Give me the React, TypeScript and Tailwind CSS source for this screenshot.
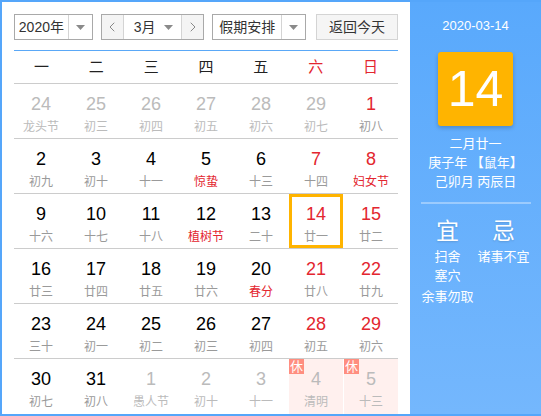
import { ChevronLeft, ChevronRight } from 'lucide-react'

type Day = {
  d: number
  lunar: string
  other?: boolean
  red?: boolean
  fest?: boolean
  today?: boolean
  rest?: boolean
}

const weekdays = ['一', '二', '三', '四', '五', '六', '日']

const rows: Day[][] = [
  [
    { d: 24, lunar: '龙头节', other: true },
    { d: 25, lunar: '初三', other: true },
    { d: 26, lunar: '初四', other: true },
    { d: 27, lunar: '初五', other: true },
    { d: 28, lunar: '初六', other: true },
    { d: 29, lunar: '初七', other: true },
    { d: 1, lunar: '初八', red: true },
  ],
  [
    { d: 2, lunar: '初九' },
    { d: 3, lunar: '初十' },
    { d: 4, lunar: '十一' },
    { d: 5, lunar: '惊蛰', fest: true },
    { d: 6, lunar: '十三' },
    { d: 7, lunar: '十四', red: true },
    { d: 8, lunar: '妇女节', red: true, fest: true },
  ],
  [
    { d: 9, lunar: '十六' },
    { d: 10, lunar: '十七' },
    { d: 11, lunar: '十八' },
    { d: 12, lunar: '植树节', fest: true },
    { d: 13, lunar: '二十' },
    { d: 14, lunar: '廿一', red: true, today: true },
    { d: 15, lunar: '廿二', red: true },
  ],
  [
    { d: 16, lunar: '廿三' },
    { d: 17, lunar: '廿四' },
    { d: 18, lunar: '廿五' },
    { d: 19, lunar: '廿六' },
    { d: 20, lunar: '春分', fest: true },
    { d: 21, lunar: '廿八', red: true },
    { d: 22, lunar: '廿九', red: true },
  ],
  [
    { d: 23, lunar: '三十' },
    { d: 24, lunar: '初一' },
    { d: 25, lunar: '初二' },
    { d: 26, lunar: '初三' },
    { d: 27, lunar: '初四' },
    { d: 28, lunar: '初五', red: true },
    { d: 29, lunar: '初六', red: true },
  ],
  [
    { d: 30, lunar: '初七' },
    { d: 31, lunar: '初八' },
    { d: 1, lunar: '愚人节', other: true },
    { d: 2, lunar: '初十', other: true },
    { d: 3, lunar: '十一', other: true },
    { d: 4, lunar: '清明', other: true, rest: true },
    { d: 5, lunar: '十三', other: true, rest: true },
  ],
]

function Caret() {
  return (
    <svg width="9" height="5" viewBox="0 0 9 5">
      <path d="M0 0h9L4.5 5z" fill="#8a8a8a" />
    </svg>
  )
}

function Cell({ day }: { day: Day }) {
  const numColor = day.other ? 'text-[#bbbbbb]' : day.red ? 'text-[#e3262f]' : 'text-black'
  const lunarColor = day.other ? 'text-[#bbbbbb]' : day.fest ? 'text-[#e3262f]' : 'text-[#9a9a9a]'
  return (
    <div
      className={`relative flex flex-col items-center pt-[9px] ${day.rest ? 'bg-[#fff0ee]' : ''} ${
        day.today ? 'outline-3 -outline-offset-3 outline-[#ffb400]' : ''
      }`}
    >
      {day.rest && (
        <span className="absolute left-0 top-0 w-[15px] h-[15px] bg-[#ff8e80] text-white text-[13px] leading-[15px] text-center">
          休
        </span>
      )}
      <span className={`text-[18px] leading-[22px] ${numColor}`}>{day.d}</span>
      <span className={`text-[12px] leading-[16px] mt-[4px] ${lunarColor}`}>{day.lunar}</span>
    </div>
  )
}

export default function App() {
  return (
    <div
      className="w-[541px] h-[416px] flex border-l-2 border-t-2 border-b-2 border-[#55a6fa] bg-white"
      style={{ fontFamily: '"Liberation Sans", "Noto Sans CJK SC", sans-serif' }}
    >
      <div className="w-[408px] pl-[12px] pr-[12px] pt-[12px] flex flex-col">
        <div className="flex items-center h-[26px] text-[14px] text-[#333]">
          <div className="flex h-[26px] w-[79px] border border-[#a9a9a9]">
            <div className="flex-1 flex items-center justify-center">2020年</div>
            <div className="w-[24px] border-l border-[#d4d4d4] flex items-center justify-center">
              <Caret />
            </div>
          </div>
          <div className="flex h-[26px] w-[104px] ml-[8px] border border-[#a9a9a9]">
            <div className="w-[21px] bg-[#f4f4f4] flex items-center justify-center text-[#777]">
              <ChevronLeft size={16} strokeWidth={1.3} />
            </div>
            <div className="flex-1 flex items-center border-l border-r border-[#d4d4d4] pl-[10px] pr-[8px] justify-between">
              <span>3月</span>
              <Caret />
            </div>
            <div className="w-[21px] bg-[#f4f4f4] flex items-center justify-center text-[#777]">
              <ChevronRight size={16} strokeWidth={1.3} />
            </div>
          </div>
          <div className="flex h-[26px] w-[94px] ml-[8px] border border-[#a9a9a9]">
            <div className="flex-1 flex items-center justify-center">假期安排</div>
            <div className="w-[24px] border-l border-[#d4d4d4] flex items-center justify-center">
              <Caret />
            </div>
          </div>
          <div className="h-[26px] w-[82px] ml-[10px] border border-[#d4d4d4] bg-[#f5f5f5] flex items-center justify-center">
            返回今天
          </div>
        </div>

        <div className="mt-[10px] border-t border-[#5aa8f7] grid grid-cols-7 h-[34px] border-b border-b-[#cccccc] items-center text-[15px]">
          {weekdays.map((w, i) => (
            <div key={w} className={`text-center ${i >= 5 ? 'text-[#e3262f]' : 'text-[#222]'}`}>
              {w}
            </div>
          ))}
        </div>

        {rows.map((row, ri) => (
          <div
            key={ri}
            className={`grid grid-cols-7 h-[55px] gap-x-px ${ri < rows.length - 1 ? 'border-b border-[#cccccc]' : ''}`}
          >
            {row.map((day, di) => (
              <Cell key={di} day={day} />
            ))}
          </div>
        ))}
      </div>

      <div className="flex-1 bg-gradient-to-b from-[#59a9fc] to-[#74b7fd] flex flex-col items-center text-white">
        <div className="mt-[15px] text-[13px] leading-[18px]">2020-03-14</div>
        <div className="mt-[17px] w-[75px] h-[74px] rounded-[3px] bg-[#ffb400] shadow-[0_2px_4px_rgba(0,0,0,0.2)] flex items-center justify-center text-[50px] leading-none">
          14
        </div>
        <div className="mt-[8px] text-[13px] leading-[19px] text-center">
          <div>二月廿一</div>
          <div>庚子年 【鼠年】</div>
          <div>己卯月 丙辰日</div>
        </div>
        <div className="mt-[11px] w-[110px] h-[2px] bg-white/35" />
        <div className="mt-[13px] w-[112px] flex text-[13px] leading-[19px]">
          <div className="w-[56px] flex flex-col items-center">
            <div className="text-[23px] leading-[28px] mb-[2px] [text-shadow:0_1px_2px_rgba(0,0,0,0.15)]">宜</div>
            <div>扫舍</div>
            <div>塞穴</div>
            <div className="mt-[2px] whitespace-nowrap">余事勿取</div>
          </div>
          <div className="flex-1 flex flex-col items-center">
            <div className="text-[23px] leading-[28px] mb-[2px] [text-shadow:0_1px_2px_rgba(0,0,0,0.15)]">忌</div>
            <div className="whitespace-nowrap">诸事不宜</div>
          </div>
        </div>
      </div>
    </div>
  )
}
